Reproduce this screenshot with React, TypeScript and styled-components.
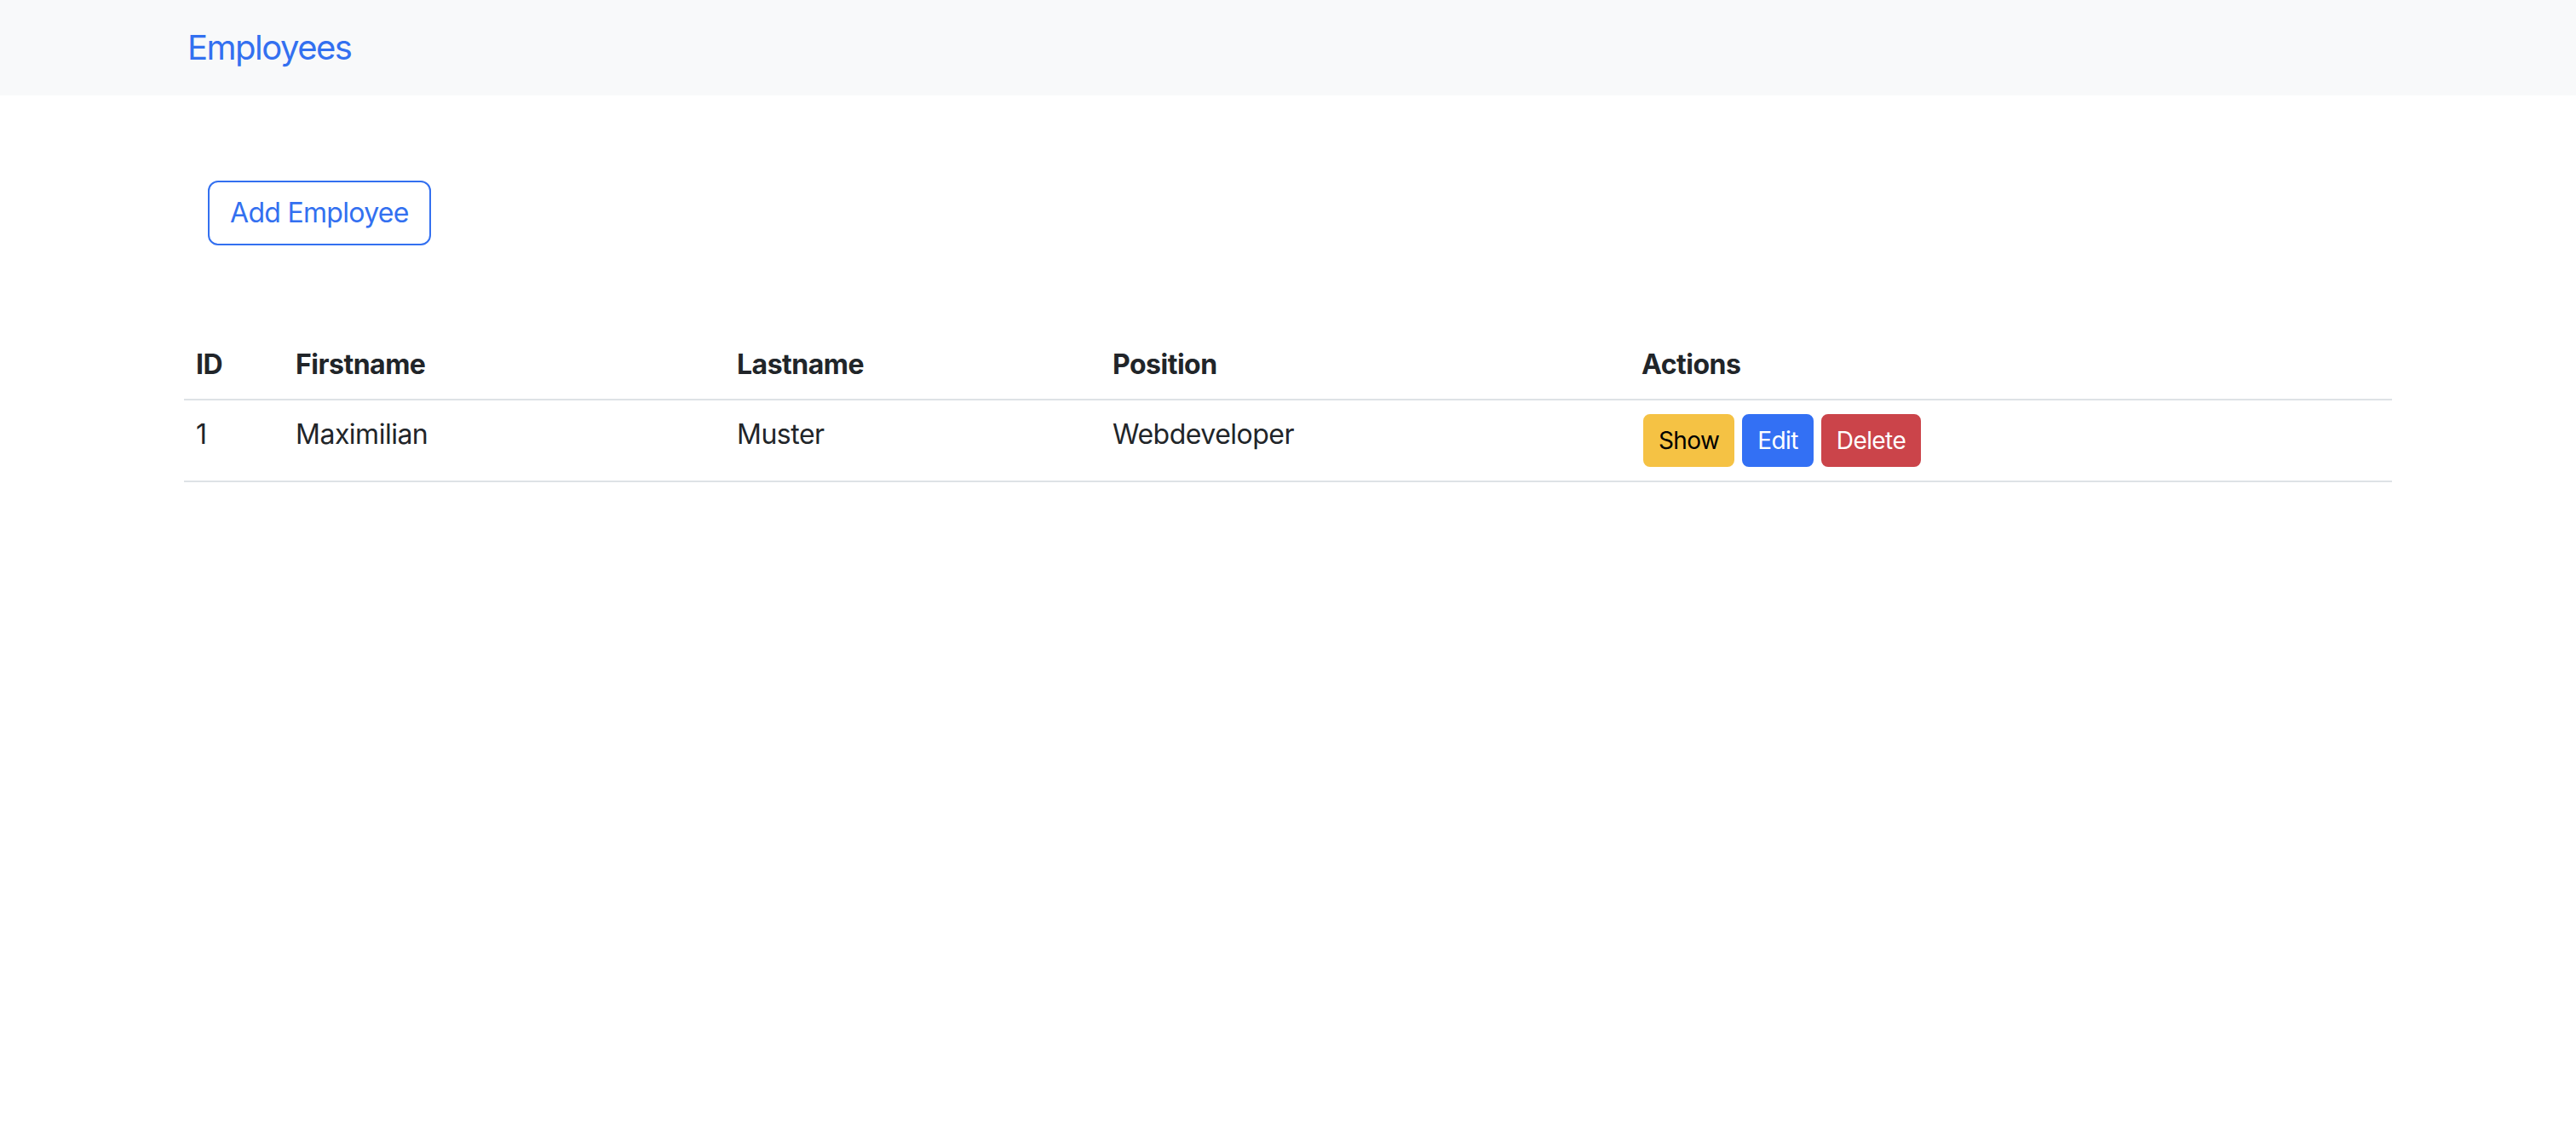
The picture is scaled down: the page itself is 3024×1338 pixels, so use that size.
import React from "react";
import styled, { createGlobalStyle } from "styled-components";

const GlobalStyle = createGlobalStyle`
  html, body { margin: 0; padding: 0; background: #ffffff; }
  body {
    font-family: Inter, "Liberation Sans", sans-serif;
    font-size: 32px;
    line-height: 1.5;
    color: #212529;
    letter-spacing: -0.5px;
  }
  * { box-sizing: border-box; }
`;

const NavBar = styled.nav`
  background: #f8f9fa;
  padding: 16px 0;
`;

const Container = styled.div`
  max-width: 2640px;
  margin: 0 auto;
  padding: 0 24px;
`;

const Brand = styled.a`
  display: inline-block;
  padding: 10px 0 10px 4px;
  font-size: 40px;
  line-height: 60px;
  letter-spacing: -1.5px;
  color: #3370f0;
  text-decoration: none;
`;

const Toolbar = styled.div`
  display: flex;
  padding: 100px 0 0 28px;
`;

const OutlineButton = styled.button`
  font-family: inherit;
  font-size: 32px;
  line-height: 48px;
  letter-spacing: -0.7px;
  padding: 12px 24px;
  border: 2px solid #3370f0;
  border-radius: 12px;
  color: #3370f0;
  background: transparent;
`;

const Table = styled.table`
  width: 100%;
  margin-top: 100px;
  border-collapse: collapse;
  table-layout: fixed;
  vertical-align: top;
`;

const Col = styled.col<{ $w?: number }>`
  width: ${(p) => (p.$w ? `${p.$w}px` : "auto")};
`;

const Th = styled.th`
  text-align: left;
  font-weight: 700;
  padding: 16px 16px 16px 14px;
  line-height: 48px;
  border-bottom: 2px solid #dee2e6;
  color: #212529;
`;

const Td = styled.td`
  padding: 16px 16px 16px 14px;
  line-height: 48px;
  border-bottom: 2px solid #dee2e6;
  vertical-align: top;
`;

const Actions = styled.div`
  display: flex;
  gap: 9px;
  padding-left: 2px;
`;

const variants = {
  warning: { bg: "#f5c244", fg: "#000000" },
  primary: { bg: "#3370f4", fg: "#ffffff" },
  danger: { bg: "#cb444a", fg: "#ffffff" },
};

const SmallButton = styled.button<{ $v: keyof typeof variants }>`
  font-family: inherit;
  font-size: 28px;
  line-height: 42px;
  letter-spacing: -0.6px;
  padding: 8px 16px;
  border: 2px solid ${(p) => variants[p.$v].bg};
  border-radius: 8px;
  background: ${(p) => variants[p.$v].bg};
  color: ${(p) => variants[p.$v].fg};
`;

const employees = [
  { id: 1, firstname: "Maximilian", lastname: "Muster", position: "Webdeveloper" },
];

export default function App() {
  return (
    <>
      <GlobalStyle />
      <NavBar>
        <Container>
          <Brand href="#">Employees</Brand>
        </Container>
      </NavBar>
      <Container>
        <Toolbar>
          <OutlineButton>Add Employee</OutlineButton>
        </Toolbar>
        <Table>
          <colgroup>
            <Col $w={117} />
            <Col $w={518} />
            <Col $w={441} />
            <Col $w={621} />
            <Col />
          </colgroup>
          <thead>
            <tr>
              <Th>ID</Th>
              <Th>Firstname</Th>
              <Th>Lastname</Th>
              <Th>Position</Th>
              <Th>Actions</Th>
            </tr>
          </thead>
          <tbody>
            {employees.map((e) => (
              <tr key={e.id}>
                <Td>{e.id}</Td>
                <Td>{e.firstname}</Td>
                <Td>{e.lastname}</Td>
                <Td>{e.position}</Td>
                <Td>
                  <Actions>
                    <SmallButton $v="warning">Show</SmallButton>
                    <SmallButton $v="primary">Edit</SmallButton>
                    <SmallButton $v="danger">Delete</SmallButton>
                  </Actions>
                </Td>
              </tr>
            ))}
          </tbody>
        </Table>
      </Container>
    </>
  );
}
